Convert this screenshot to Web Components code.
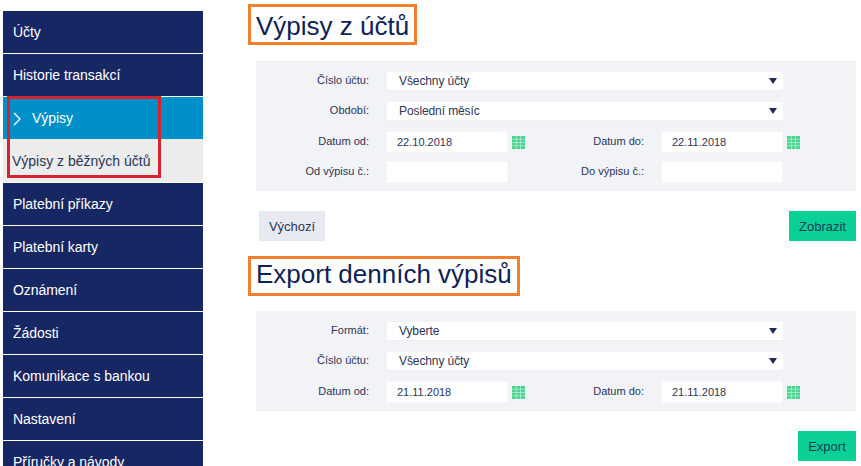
<!DOCTYPE html>
<html lang="cs"><head><meta charset="utf-8"><title>Výpisy</title>
<style>
html,body{margin:0;padding:0;background:#fff;height:466px;overflow:hidden}
body{font-family:"Liberation Sans",Arial,sans-serif;color:#1c2a52}
app-shell{width:861px;height:466px}
</style></head><body>
<app-shell>
  <side-nav slot="nav">
    <nav-item>Účty</nav-item>
    <nav-item>Historie transakcí</nav-item>
    <nav-item active>Výpisy</nav-item>
    <nav-item sub>Výpisy z běžných účtů</nav-item>
    <nav-item>Platební příkazy</nav-item>
    <nav-item>Platební karty</nav-item>
    <nav-item>Oznámení</nav-item>
    <nav-item>Žádosti</nav-item>
    <nav-item>Komunikace s bankou</nav-item>
    <nav-item>Nastavení</nav-item>
    <nav-item>Příručky a návody</nav-item>
  </side-nav>
  <section-title style="margin-top:4px;--h:41px;--lh:39px">Výpisy z účtů</section-title>
  <form-panel style="margin-top:16px">
    <form-row wide label="Číslo účtu:" value="Všechny účty"></form-row>
    <form-row wide label="Období:" value="Poslední měsíc"></form-row>
    <form-row label="Datum od:" value="22.10.2018" label2="Datum do:" value2="22.11.2018" cal></form-row>
    <form-row label="Od výpisu č.:" label2="Do výpisu č.:"></form-row>
  </form-panel>
  <button-bar style="margin-top:20px">
    <ui-button>Výchozí</ui-button>
    <ui-button primary>Zobrazit</ui-button>
  </button-bar>
  <section-title style="margin-top:15px;--h:40px;--lh:31px">Export denních výpisů</section-title>
  <form-panel style="margin-top:15px">
    <form-row wide label="Formát:" value="Vyberte"></form-row>
    <form-row wide label="Číslo účtu:" value="Všechny účty"></form-row>
    <form-row label="Datum od:" value="21.11.2018" label2="Datum do:" value2="21.11.2018" cal></form-row>
  </form-panel>
  <button-bar end style="margin-top:20px">
    <ui-button primary narrow>Export</ui-button>
  </button-bar>
</app-shell>
<script>
const def=(name,css,html)=>{
  customElements.define(name,class extends HTMLElement{
    connectedCallback(){
      if(this.shadowRoot)return;
      const r=this.attachShadow({mode:"open"});
      r.innerHTML=`<style>${css}</style>`+(typeof html==="function"?html(this):html);
    }
  });
};
def("app-shell",`
  :host{display:flex;position:relative;align-items:flex-start;overflow:hidden}
  .nav{flex:none;margin-left:3px}
  main{flex:none;width:608px;margin-left:45px;display:flex;flex-direction:column}
  .hl{position:absolute;left:7px;top:96px;width:148px;height:76px;border:3px solid #d9222f;pointer-events:none}
`,`<div class="nav"><slot name="nav"></slot></div><main><slot></slot></main><div class="hl"></div>`);
def("side-nav",`:host{display:flex;flex-direction:column;width:200px;height:455px;padding-top:11px;overflow:hidden}`,`<slot></slot>`);
def("nav-item",`
  :host{display:flex;align-items:center;flex:none;height:42px;margin-bottom:1px;padding-left:10px;background:#172763;color:#fff;font-size:14px;letter-spacing:-.05px;line-height:42px;position:relative;box-sizing:border-box}
  :host([active]){background:#0090c9;padding-left:29px;margin-bottom:0}
  :host([sub]){background:#ececec;color:#2b3557;height:43px;padding-left:9px;margin-bottom:1px;letter-spacing:0}
  svg{position:absolute;left:10px;top:15px}
`,h=>(h.hasAttribute("active")?`<svg width="8" height="14" viewBox="0 0 8 14"><path d="M1 1l6 6-6 6" fill="none" stroke="#fff" stroke-width="1.3"/></svg>`:"")+`<slot></slot>`);
def("section-title",`
  :host{display:block;align-self:flex-start}
  h1{margin:0;display:inline-block;box-sizing:border-box;height:var(--h);line-height:var(--lh);padding:0 5px;border:3px solid #f08030;font-weight:400;font-size:26px;color:#0e2256;white-space:nowrap}
`,`<h1><slot></slot></h1>`);
def("form-panel",`:host{display:flex;flex-direction:column;gap:10px;margin-left:8px;width:600px;padding:11px 0 9px;background:#f1f3f7;box-sizing:border-box}`,`<slot></slot>`);
const CAL=`<svg class="cal" width="13" height="13" viewBox="0 0 13 13"><rect width="13" height="13" fill="#46d690"/><path d="M0 3.2h13M0 6.5h13M0 9.8h13M4.3 0v13M8.6 0v13" stroke="#b8eed2" stroke-width=".8"/></svg>`;
def("form-row",`
  :host{display:flex;align-items:center;height:20px;font-size:11px;color:#2b3557}
  :host([wide]){align-items:flex-start}
  .l{width:113px;text-align:right;flex:none;margin-right:18px;white-space:nowrap;line-height:18px;margin-top:-2px}
  :host([wide]) .l{margin-top:0;line-height:17px}
  .l2{width:119px}
  .sel{flex:none;box-sizing:border-box;width:396px;height:18px;background:#fff;display:flex;align-items:center;justify-content:space-between;padding:0 6px 0 12px;font-size:12px;letter-spacing:-.1px;box-shadow:0 1px 0 #eceef2}
  .arrow{width:0;height:0;border-left:4px solid transparent;border-right:4px solid transparent;border-top:6px solid #1f2a55}
  .inp{flex:none;box-sizing:border-box;width:120px;height:20px;background:#fff;padding:1px 0 0 10px;line-height:19px;font-size:11px;box-shadow:0 0 0 1px #f6f7fa}
  .cal{flex:none;margin-left:5px;width:13px;margin-top:1px}
  .gap{flex:none;width:18px}
`,h=>{
  const a=n=>h.getAttribute(n)||"";
  if(h.hasAttribute("wide"))return `<span class="l">${a("label")}</span><div class="sel"><span>${a("value")}</span><span class="arrow"></span></div>`;
  const c=h.hasAttribute("cal")?CAL:`<span class="gap"></span>`;
  return `<span class="l">${a("label")}</span><div class="inp">${a("value")}</div>${c}<span class="l l2">${a("label2")}</span><div class="inp">${a("value2")}</div>${c}`;
});
def("button-bar",`:host{display:flex;justify-content:space-between;margin-left:11px;width:597px}:host([end]){justify-content:flex-end}`,`<slot></slot>`);
def("ui-button",`
  :host{display:flex;align-items:center;justify-content:center;box-sizing:border-box;height:30px;width:66px;background:#e6eaf0;color:#2b3557;font-size:13px}
  :host([primary]){background:#0bd096;width:67px;color:#1c3a5a}
  :host([narrow]){width:58px}
`,`<slot></slot>`);
</script>
</body></html>
